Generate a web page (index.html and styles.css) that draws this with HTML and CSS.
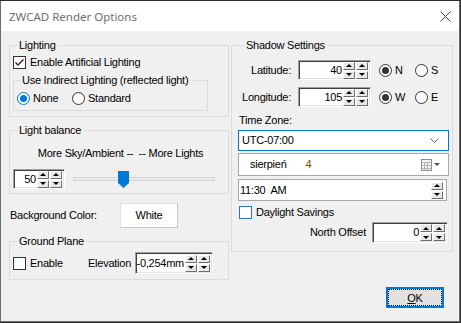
FILE: index.html
```html
<!DOCTYPE html>
<html lang="en">
<head>
    <meta charset="UTF-8">
    <title>ZWCAD Render Options</title>
    <link rel="stylesheet" href="styles.css">
</head>
<body>
    <div class="window">
        <div class="titlebar">
            <span class="title">ZWCAD Render Options</span>
            <svg class="close" width="11" height="11" viewBox="0 0 11 11">
                <path d="M0.5 0.5 L10.5 10.5 M10.5 0.5 L0.5 10.5" stroke="#444" stroke-width="1" fill="none"/>
            </svg>
        </div>
        <div class="client">
            <div class="columns">
                <div class="col-left">
                    <fieldset class="group lighting">
                        <legend>Lighting</legend>
                        <div class="lighting-body">
                            <label class="check-row">
                                <span class="checkbox checked">
                                    <svg width="11" height="11" viewBox="0 0 11 11"><path d="M1.5 5.5 L4 8 L9.5 2.5" stroke="#222" stroke-width="1.3" fill="none"/></svg>
                                </span>
                                Enable Artificial Lighting
                            </label>
                            <fieldset class="group indirect">
                                <legend>Use Indirect Lighting (reflected light)</legend>
                                <div class="radio-row">
                                    <label class="radio-opt opt-none"><span class="radio selected blue"></span>None</label>
                                    <label class="radio-opt"><span class="radio"></span>Standard</label>
                                </div>
                            </fieldset>
                        </div>
                    </fieldset>

                    <fieldset class="group balance">
                        <legend>Light balance</legend>
                        <div class="balance-caption">More Sky/Ambient --&nbsp; -- More Lights</div>
                        <div class="balance-row">
                            <div class="edit spin-edit balance-edit">
                                <span class="value">50</span>
                                <div class="spin">
                                    <div class="spin-col"><span class="sbtn up"></span><span class="sbtn down"></span></div>
                                    <div class="spin-col"><span class="sbtn up"></span><span class="sbtn down"></span></div>
                                </div>
                            </div>
                            <div class="slider">
                                <div class="track"></div>
                                <svg class="thumb" width="11" height="17" viewBox="0 0 11 17">
                                    <path d="M0 0 H11 V12 L5.5 17 L0 12 Z" fill="#0078d7"/>
                                </svg>
                            </div>
                        </div>
                    </fieldset>

                    <div class="bg-row">
                        <span class="bg-label">Background Color:</span>
                        <span class="white-btn">White</span>
                    </div>

                    <fieldset class="group ground">
                        <legend>Ground Plane</legend>
                        <div class="ground-row">
                            <label class="check-row ground-enable"><span class="checkbox"></span>Enable</label>
                            <span class="elev-label">Elevation</span>
                            <div class="edit spin-edit elev-edit">
                                <span class="value left">-0,254mm</span>
                                <div class="spin">
                                    <div class="spin-col"><span class="sbtn up"></span><span class="sbtn down"></span></div>
                                    <div class="spin-col"><span class="sbtn up"></span><span class="sbtn down"></span></div>
                                </div>
                            </div>
                        </div>
                    </fieldset>
                </div>

                <div class="col-right">
                    <fieldset class="group shadow">
                        <legend>Shadow Settings</legend>
                        <div class="coord-row first">
                            <span class="coord-label">Latitude:</span>
                            <div class="edit spin-edit coord-edit">
                                <span class="value">40</span>
                                <div class="spin">
                                    <div class="spin-col"><span class="sbtn up"></span><span class="sbtn down"></span></div>
                                    <div class="spin-col"><span class="sbtn up"></span><span class="sbtn down"></span></div>
                                </div>
                            </div>
                            <label class="radio-opt dir"><span class="radio selected"></span>N</label>
                            <label class="radio-opt"><span class="radio"></span>S</label>
                        </div>
                        <div class="coord-row">
                            <span class="coord-label">Longitude:</span>
                            <div class="edit spin-edit coord-edit">
                                <span class="value">105</span>
                                <div class="spin">
                                    <div class="spin-col"><span class="sbtn up"></span><span class="sbtn down"></span></div>
                                    <div class="spin-col"><span class="sbtn up"></span><span class="sbtn down"></span></div>
                                </div>
                            </div>
                            <label class="radio-opt dir"><span class="radio selected"></span>W</label>
                            <label class="radio-opt"><span class="radio"></span>E</label>
                        </div>

                        <div class="tz-label">Time Zone:</div>
                        <div class="combo">
                            <span>UTC-07:00</span>
                            <svg width="9" height="5" viewBox="0 0 9 5"><path d="M0.5 0.5 L4.5 4.5 L8.5 0.5" stroke="#606060" fill="none"/></svg>
                        </div>
                        <div class="datebox">
                            <span class="month">sierpień</span>
                            <span class="day">4</span>
                            <span class="cal">
                                <svg width="20" height="12" viewBox="0 0 20 12">
                                    <rect x="0.5" y="0.5" width="10" height="11" fill="#f4f4f4" stroke="#8c8c8c"/>
                                    <path d="M0.5 3.5 H10.5 M0.5 6.5 H10.5 M0.5 9.5 H10.5 M3.5 3.5 V11.5 M6.5 3.5 V11.5" stroke="#b4b4b4" fill="none"/>
                                    <path d="M13 4 H19 L16 7 Z" fill="#555"/>
                                </svg>
                            </span>
                        </div>
                        <div class="timebox">
                            <span>11:30&nbsp; AM</span>
                            <div class="vspin"><span class="sbtn up"></span><span class="sbtn down"></span></div>
                        </div>
                        <label class="check-row daylight"><span class="checkbox hover"></span>Daylight Savings</label>
                        <div class="north-row">
                            <span class="north-label">North Offset</span>
                            <div class="edit spin-edit north-edit">
                                <span class="value">0</span>
                                <div class="spin">
                                    <div class="spin-col"><span class="sbtn up"></span><span class="sbtn down"></span></div>
                                    <div class="spin-col"><span class="sbtn up"></span><span class="sbtn down"></span></div>
                                </div>
                            </div>
                        </div>
                    </fieldset>
                </div>
            </div>
            <div class="footer">
                <button class="ok-btn"><span class="focus"><u>O</u>K</span></button>
            </div>
        </div>
    </div>
</body>
</html>
```

FILE: styles.css
```css
* {
    box-sizing: border-box;
}
html, body {
    margin: 0;
    padding: 0;
}
body {
    background-color: #2d2d2d;
    font-family: 'Liberation Sans', Arial, sans-serif;
    font-size: 11px;
    line-height: 13px;
    letter-spacing: -0.25px;
    color: #000;
    overflow: hidden;
}
.window {
    width: 460px;
    height: 321px;
    margin-top: 1px;
    background-color: #f0f0f0;
    border: 1px solid #6b6b6b;
    border-top: none;
    display: flex;
    flex-direction: column;
}
.titlebar {
    flex: none;
    height: 30px;
    background-color: #fff;
    display: flex;
    align-items: center;
    padding: 0 8px 0 8px;
}
.title {
    font-family: 'Noto Sans', sans-serif;
    font-size: 11.5px;
    letter-spacing: 0;
    color: #707070;
}
.close {
    margin-left: auto;
}
.client {
    flex: 1;
    display: flex;
    flex-direction: column;
    padding: 8px 6px 0 8px;
}
.columns {
    display: flex;
    gap: 2px;
}
.col-left {
    width: 220px;
    display: flex;
    flex-direction: column;
}
.col-right {
    width: 222px;
}

/* group boxes */
.group {
    margin: 0;
    padding: 0;
    border: 1px solid #dcdcdc;
    min-width: 0;
}
.group legend {
    padding: 0 2px;
    margin-left: 7px;
    line-height: 13px;
}
.lighting-body {
    padding: 4px 3px 5px 3px;
}
.check-row {
    display: flex;
    align-items: center;
    height: 13px;
    gap: 4px;
}
.checkbox {
    width: 13px;
    height: 13px;
    border: 1px solid #333;
    background-color: #fff;
    display: flex;
    align-items: center;
    justify-content: center;
    flex: none;
}
.checkbox.hover {
    border-color: #2c74bd;
}
.indirect {
    margin-top: 5px;
    width: 195px;
}
.indirect legend {
    margin-left: 6px;
}
.radio-row {
    display: flex;
    height: 13px;
    margin: 5px 0 5px 3px;
}
.radio-opt {
    display: flex;
    align-items: center;
    gap: 3px;
}
.opt-none {
    width: 55px;
}
.radio {
    width: 13px;
    height: 13px;
    border: 1px solid #333;
    border-radius: 50%;
    background-color: #fff;
    display: flex;
    align-items: center;
    justify-content: center;
    flex: none;
}
.radio.selected::after {
    content: '';
    width: 7px;
    height: 7px;
    border-radius: 50%;
    background-color: #333;
}
.radio.blue {
    border-color: #0078d7;
}
.radio.blue::after {
    background-color: #0078d7;
}

/* light balance */
.balance {
    margin-top: 7px;
}
.balance-caption {
    text-align: center;
    margin: 10px 0 0 3px;
}
.balance-row {
    display: flex;
    align-items: center;
    margin: 9px 0 4px 3px;
}

/* edit boxes with spinners */
.edit {
    background-color: #fff;
    border-style: solid;
    border-width: 1px;
    border-color: #a0a0a0 #fff #fff #a0a0a0;
    box-shadow: inset 1px 1px 0 #404040, inset -1px -1px 0 #e3e3e3;
}
.spin-edit {
    display: flex;
    align-items: center;
    justify-content: flex-end;
    padding: 0 2px 0 3px;
}
.spin-edit .value {
    flex: 1;
    text-align: right;
    padding-right: 1px;
}
.spin-edit .value.left {
    text-align: left;
}
.spin {
    display: flex;
    gap: 1px;
}
.spin-col {
    display: flex;
    flex-direction: column;
    gap: 1px;
}
.sbtn {
    width: 12px;
    height: 8px;
    background-color: #e8e8e8;
    border: 1px solid;
    border-color: #fff #6e6e6e #6e6e6e #fff;
    display: flex;
    align-items: center;
    justify-content: center;
}
.sbtn::before {
    content: '';
    border-left: 3px solid transparent;
    border-right: 3px solid transparent;
}
.sbtn.up::before {
    border-bottom: 3px solid #000;
}
.sbtn.down::before {
    border-top: 3px solid #000;
}
.balance-edit {
    width: 52px;
    height: 20px;
}
.slider {
    position: relative;
    margin-left: 8px;
    width: 142px;
    height: 17px;
    display: flex;
    align-items: center;
}
.track {
    width: 100%;
    height: 4px;
    background-color: #e7eaea;
    border: 1px solid #d6d6d6;
}
.thumb {
    position: absolute;
    left: 45px;
    top: 0;
}

/* background color */
.bg-row {
    display: flex;
    align-items: center;
    margin-top: 8px;
    height: 26px;
}
.bg-label {
    margin-left: 1px;
    width: 110px;
}
.white-btn {
    width: 58px;
    height: 25px;
    background-color: #fff;
    border: 1px solid #e0e0e0;
    border-right-color: #c8c8c8;
    border-bottom-color: #c8c8c8;
    display: flex;
    align-items: center;
    justify-content: center;
}

/* ground plane */
.ground {
    margin-top: 7px;
}
.ground-row {
    display: flex;
    align-items: center;
    height: 22px;
    margin: 4px 0 5px 3px;
}
.ground-enable {
    width: 75px;
}
.elev-label {
    width: 47px;
}
.elev-edit {
    width: 78px;
    height: 22px;
    padding-left: 3px;
}

/* shadow settings */
.shadow legend {
    margin-left: 12px;
}
.coord-row {
    display: flex;
    align-items: center;
    height: 20px;
    margin-top: 7px;
}
.coord-row.first {
    margin-top: 8px;
}
.coord-label {
    width: 59px;
    text-align: right;
    margin-right: 7px;
}
.coord-edit {
    width: 73px;
    height: 20px;
    margin-right: 8px;
}
.dir {
    width: 36px;
}
.tz-label {
    margin: 7px 0 0 7px;
}
.combo, .datebox, .timebox {
    margin-left: 6px;
    width: 211px;
    background-color: #fff;
    display: flex;
    align-items: center;
}
.combo {
    margin-top: 3px;
    height: 21px;
    border: 1px solid #0078d7;
    padding: 0 9px 0 3px;
    justify-content: space-between;
}
.datebox {
    margin-top: 2px;
    height: 23px;
    border: 1px solid #a8a8a8;
    padding: 0 7px 0 11px;
}
.day {
    margin-left: 19px;
    color: #6b5300;
}
.cal {
    margin-left: auto;
    display: flex;
}
.timebox {
    margin-top: 3px;
    height: 22px;
    width: 209px;
    border: 1px solid #a8a8a8;
    padding: 0 3px 0 1px;
    justify-content: space-between;
}
.vspin {
    display: flex;
    flex-direction: column;
    gap: 1px;
}
.daylight {
    margin: 5px 0 0 7px;
}
.north-row {
    display: flex;
    align-items: center;
    justify-content: flex-end;
    margin: 3px 4px 8px 0;
}
.north-label {
    margin-right: 6px;
}
.north-edit {
    width: 76px;
    height: 21px;
}

/* footer */
.footer {
    display: flex;
    justify-content: flex-end;
    padding: 7px 9px 0 0;
}
.ok-btn {
    width: 58px;
    height: 21px;
    padding: 1px;
    background-color: #e1e1e1;
    border: 1px solid #0078d7;
    box-shadow: inset 0 0 0 1px #0078d7;
    font-family: inherit;
    font-size: 11px;
    letter-spacing: -0.25px;
    color: #000;
    display: flex;
}
.ok-btn .focus {
    flex: 1;
    border: 1px dotted #000;
    display: flex;
    align-items: center;
    justify-content: center;
}
```
